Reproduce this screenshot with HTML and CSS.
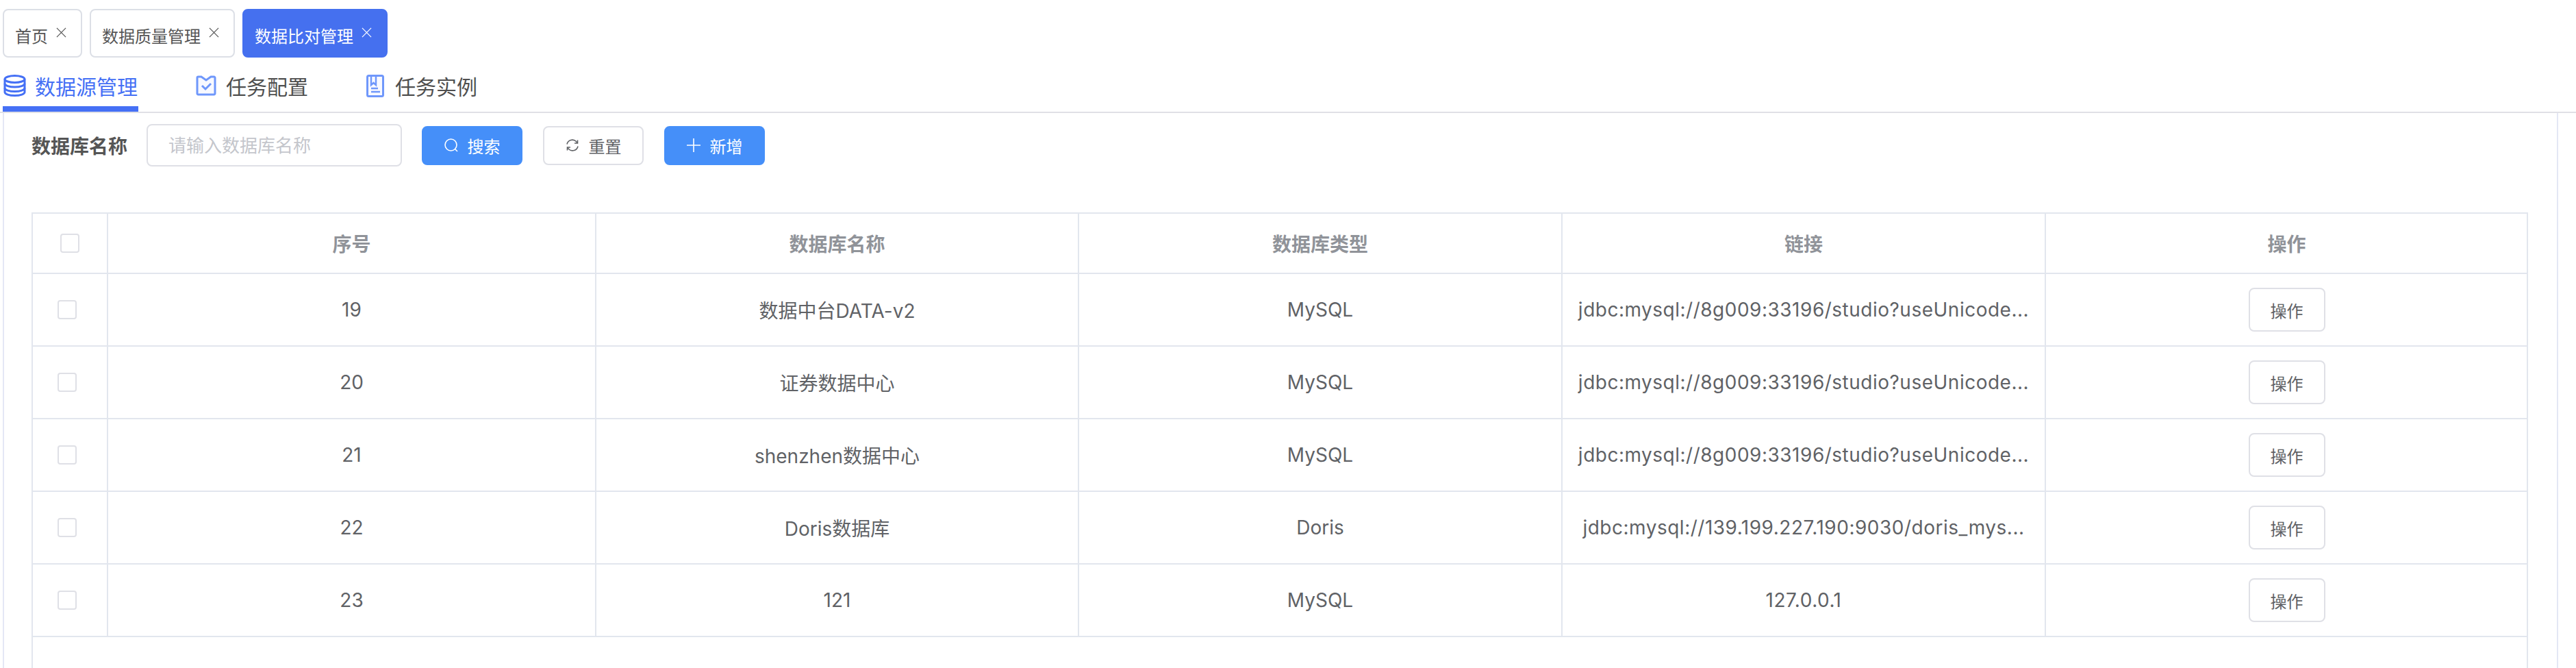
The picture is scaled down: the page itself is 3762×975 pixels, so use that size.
FILE: index.html
```html
<!DOCTYPE html>
<html lang="zh-CN">
<head>
  <meta charset="UTF-8" />
  <title>数据比对管理</title>
  <link rel="stylesheet" href="styles.css">
</head>
<body>
  <div class="tags">
    <div class="tag">首页<svg class="tag-close" viewBox="0 0 16 16"><path d="M1 1l14 14M15 1L1 15"/></svg></div>
    <div class="tag">数据质量管理<svg class="tag-close" viewBox="0 0 16 16"><path d="M1 1l14 14M15 1L1 15"/></svg></div>
    <div class="tag active">数据比对管理<svg class="tag-close" viewBox="0 0 16 16"><path d="M1 1l14 14M15 1L1 15"/></svg></div>
  </div>

  <div class="tabs">
    <div class="tab active">
      <svg class="tab-icon icon-db" viewBox="0 0 33 32">
        <ellipse cx="16.5" cy="6.5" rx="14.5" ry="5"/>
        <path d="M2 6.500v19c0 2.800 6.500 5 14.500 5s14.500-2.200 14.500-5v-19"/>
        <path d="M2 13c0 2.800 6.500 5 14.500 5S31 15.800 31 13"/>
        <path d="M2 19.500c0 2.800 6.500 5 14.500 5s14.500-2.200 14.500-5"/>
      </svg>
      数据源管理
    </div>
    <div class="tab">
      <svg class="tab-icon icon-task" viewBox="0 0 30 30">
        <path d="M8 2H3.500A1.500 1.500 0 0 0 2 3.500v23A1.500 1.500 0 0 0 3.500 28h23a1.500 1.500 0 0 0 1.500-1.500v-23A1.500 1.500 0 0 0 26.500 2H22l-7 5z"/>
        <path d="M9 15l5 5 8-8"/>
      </svg>
      任务配置
    </div>
    <div class="tab">
      <svg class="tab-icon icon-book" viewBox="0 0 26 33">
        <rect x="1.500" y="1.500" width="23" height="30" rx="2"/>
        <path d="M7 2v13l3.500-3 3.500 3V2"/>
        <path d="M7 20h10M7 25h13"/>
      </svg>
      任务实例
    </div>
  </div>

  <div class="panel">
    <div class="search-row">
      <label class="search-label">数据库名称</label>
      <input class="search-input" type="text" placeholder="请输入数据库名称" />
      <button class="btn btn-primary btn-search">
        <svg class="btn-icon" viewBox="0 0 20 20"><circle cx="9.500" cy="9.500" r="8.500"/><path d="M15.500 15.500l3.500 3.500"/></svg>搜索
      </button>
      <button class="btn btn-reset">
        <svg class="btn-icon" viewBox="0 0 20 20"><path d="M2 8.500A8 8 0 0 1 15.500 4.500L17.500 7M18 11.500A8 8 0 0 1 4.500 15.500L2.500 13"/><path d="M17.500 2.500V7H13M2.500 17.500V13H7"/></svg>重置
      </button>
      <button class="btn btn-primary btn-add">
        <svg class="btn-icon" viewBox="0 0 20 20"><path d="M10 0v20M0 10h20"/></svg>新增
      </button>
    </div>

    <div class="table-wrap">
      <table class="data-table">
        <colgroup>
          <col class="col-check"><col class="col-id"><col class="col-name"><col class="col-type"><col class="col-link"><col class="col-op">
        </colgroup>
        <thead>
          <tr>
            <th><span class="checkbox head-check"></span></th>
            <th>序号</th>
            <th>数据库名称</th>
            <th>数据库类型</th>
            <th>链接</th>
            <th>操作</th>
          </tr>
        </thead>
        <tbody>
          <tr>
            <td><span class="checkbox"></span></td>
            <td>19</td>
            <td>数据中台DATA-v2</td>
            <td>MySQL</td>
            <td class="link-cell">jdbc:mysql://8g009:33196/studio?useUnicode...</td>
            <td><button class="op-btn">操作</button></td>
          </tr>
          <tr>
            <td><span class="checkbox"></span></td>
            <td>20</td>
            <td>证券数据中心</td>
            <td>MySQL</td>
            <td class="link-cell">jdbc:mysql://8g009:33196/studio?useUnicode...</td>
            <td><button class="op-btn">操作</button></td>
          </tr>
          <tr>
            <td><span class="checkbox"></span></td>
            <td>21</td>
            <td>shenzhen数据中心</td>
            <td>MySQL</td>
            <td class="link-cell">jdbc:mysql://8g009:33196/studio?useUnicode...</td>
            <td><button class="op-btn">操作</button></td>
          </tr>
          <tr>
            <td><span class="checkbox"></span></td>
            <td>22</td>
            <td>Doris数据库</td>
            <td>Doris</td>
            <td class="link-cell">jdbc:mysql://139.199.227.190:9030/doris_mys...</td>
            <td><button class="op-btn">操作</button></td>
          </tr>
          <tr>
            <td><span class="checkbox"></span></td>
            <td>23</td>
            <td>121</td>
            <td>MySQL</td>
            <td class="link-cell">127.0.0.1</td>
            <td><button class="op-btn">操作</button></td>
          </tr>
        </tbody>
      </table>
    </div>
  </div>
</body>
</html>
```

FILE: styles.css
```css
* {
  box-sizing: border-box;
}
html, body {
  height: 100%;
}
body {
  margin: 0;
  background: #fff;
  color: #606266;
  font-family: "Inter", "Noto Sans CJK SC", sans-serif;
  display: flex;
  flex-direction: column;
  overflow: hidden;
}
.tags {
  display: flex;
  gap: 11px;
  padding: 13px 0 0 4px;
}
.tag {
  display: flex;
  align-items: center;
  height: 71px;
  padding: 5px 21px 0 16px;
  border: 2px solid #dcdfe6;
  border-radius: 8px;
  font-size: 24px;
  color: #555;
}
.tag.active {
  background: #4570ef;
  border-color: #4570ef;
  color: #fff;
}
.tag-close {
  width: 15px;
  height: 15px;
  margin: -7px 0 0 12px;
  fill: none;
  stroke: currentColor;
  stroke-width: 1.300;
}
.tabs {
  display: flex;
  gap: 83px;
  height: 81px;
  padding-left: 4px;
  border-bottom: 2px solid #e0e0e6;
}
.tab {
  display: flex;
  align-items: center;
  height: 79px;
  padding: 3px 1px 0 1px;
  font-size: 30px;
  color: #4f4f4f;
}
.tab.active {
  color: #4570f5;
  border-bottom: 8px solid #4570f5;
  padding-top: 11px;
}
.tab-icon {
  fill: none;
  stroke-width: 3;
}
.icon-db {
  width: 33px;
  height: 32px;
  margin-right: 13px;
  stroke: #4570f5;
}
.icon-task {
  width: 30px;
  height: 30px;
  margin-right: 14px;
  stroke: #6f97fb;
  fill: #f8f9ff;
}
.icon-task path + path {
  fill: none;
}
.icon-book {
  width: 26px;
  height: 33px;
  margin-right: 16px;
  stroke: #6f97fb;
  fill: #f8f9ff;
}
.icon-book path {
  fill: none;
  stroke-width: 2.500;
}
.panel {
  flex: 1;
  display: flex;
  flex-direction: column;
  min-height: 0;
  margin: 0 26px 0 4px;
  padding: 16px 42px 0 40px;
  border-left: 2px solid #e4e7f5;
  border-right: 2px solid #e4e7f5;
}
.search-row {
  display: flex;
  align-items: center;
  height: 62px;
}
.search-label {
  width: 168px;
  font-size: 28px;
  font-weight: 700;
  color: #555;
}
.search-input {
  width: 373px;
  height: 62px;
  padding: 0 30px;
  border: 2px solid #dfe0e6;
  border-radius: 8px;
  font-family: inherit;
  font-size: 26px;
  outline: none;
}
.search-input::placeholder {
  color: #c4c6cc;
}
.btn {
  display: flex;
  align-items: center;
  justify-content: center;
  width: 147px;
  height: 57px;
  padding: 0;
  border: 2px solid #458ff9;
  border-radius: 8px;
  font-family: inherit;
  font-size: 24px;
}
.btn-primary {
  background: #458ff9;
  color: #fff;
}
.btn-search {
  margin-left: 29px;
}
.btn-reset {
  margin-left: 30px;
  background: #fff;
  border-color: #dfe0e6;
  color: #606266;
}
.btn-add {
  margin-left: 30px;
}
.btn-icon {
  width: 20px;
  height: 20px;
  margin-right: 14px;
  fill: none;
  stroke: currentColor;
  stroke-width: 1.600;
}
.table-wrap {
  flex: 1;
  margin-top: 67px;
  border: 2px solid #e2e6ee;
  border-bottom: none;
}
.data-table {
  width: 100%;
  border-collapse: separate;
  border-spacing: 0;
  table-layout: fixed;
}
.col-check { width: 110px; }
.col-id { width: 713px; }
.col-name { width: 705px; }
.col-type { width: 706px; }
.col-link { width: 706px; }
.col-op { width: 703px; }
.data-table th,
.data-table td {
  padding: 0 20px;
  text-align: center;
  border-right: 2px solid #e2e6ee;
  border-bottom: 2px solid #e2e6ee;
}
.data-table th:last-child,
.data-table td:last-child {
  border-right: none;
}
.data-table th {
  height: 88px;
  font-size: 28px;
  font-weight: 700;
  color: #909399;
}
.data-table td {
  height: 106px;
  font-size: 28px;
  color: #606266;
}
.data-table td.link-cell {
  padding: 0 10px;
  white-space: nowrap;
  letter-spacing: 0.5px;
}
.checkbox {
  display: block;
  width: 28px;
  height: 28px;
  margin: 0 auto;
  border: 2px solid #dfe0e6;
  border-radius: 4px;
}
.data-table td .checkbox {
  position: relative;
  left: -4px;
}
.op-btn {
  width: 112px;
  height: 64px;
  padding: 0;
  background: #fff;
  border: 2px solid #dfe0e6;
  border-radius: 8px;
  font-family: inherit;
  font-size: 24px;
  color: #606266;
  vertical-align: middle;
}
```
